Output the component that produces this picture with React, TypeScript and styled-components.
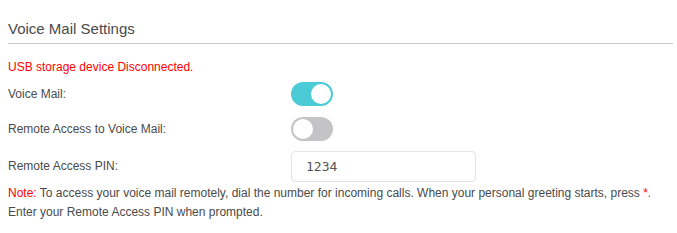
import styled, { createGlobalStyle } from "styled-components";

const GlobalStyle = createGlobalStyle`
  body {
    margin: 0;
    background: #ffffff;
    font-family: "Liberation Sans", Arial, sans-serif;
  }
`;

const Page = styled.div`
  padding: 16px 4px 0 8px;
`;

const Title = styled.h2`
  margin: 0;
  font-size: 15px;
  font-weight: normal;
  color: #4a4a4a;
  line-height: 26px;
  padding-bottom: 1px;
  border-bottom: 1px solid #cccccc;
`;

const Warning = styled.div`
  margin-top: 16px;
  font-size: 12px;
  line-height: 14px;
  color: #ff0000;
`;

const Form = styled.div`
  margin-top: 5px;
  display: flex;
  flex-direction: column;
`;

const Row = styled.div<{ $h: number }>`
  display: grid;
  grid-template-columns: 283px auto;
  align-items: center;
  height: ${(p) => p.$h}px;
`;

const Label = styled.span`
  font-size: 12px;
  color: #4a4a4a;
`;

const Toggle = styled.span<{ $on: boolean }>`
  position: relative;
  display: inline-block;
  width: 42px;
  height: 24px;
  border-radius: 12px;
  background: ${(p) => (p.$on ? "#4acbd6" : "#c4c4c6")};
  &::after {
    content: "";
    position: absolute;
    top: 2px;
    left: ${(p) => (p.$on ? "20px" : "2px")};
    width: 20px;
    height: 20px;
    border-radius: 50%;
    background: #ffffff;
  }
`;

const PinBox = styled.div`
  box-sizing: border-box;
  width: 185px;
  height: 31px;
  border: 1px solid #e3e3e3;
  border-radius: 4px;
  display: flex;
  align-items: center;
  padding-left: 14px;
  font-family: "DejaVu Sans Mono", "Liberation Mono", monospace;
  font-size: 13px;
  color: #555555;
`;

const Note = styled.p`
  margin: 1px 0 0;
  font-size: 12px;
  line-height: 19px;
  color: #4a4a4a;
`;

const Red = styled.span`
  color: #ff0000;
`;

export default function App() {
  return (
    <Page>
      <GlobalStyle />
      <Title>Voice Mail Settings</Title>
      <Warning>USB storage device Disconnected.</Warning>
      <Form>
        <Row $h={30}>
          <Label>Voice Mail:</Label>
          <Toggle $on />
        </Row>
        <Row $h={40}>
          <Label>Remote Access to Voice Mail:</Label>
          <Toggle $on={false} />
        </Row>
        <Row $h={34}>
          <Label>Remote Access PIN:</Label>
          <PinBox>1234</PinBox>
        </Row>
      </Form>
      <Note>
        <Red>Note:</Red> To access your voice mail remotely, dial the number for incoming calls. When your personal
        greeting starts, press <Red>*</Red>.
        <br />
        Enter your Remote Access PIN when prompted.
      </Note>
    </Page>
  );
}
